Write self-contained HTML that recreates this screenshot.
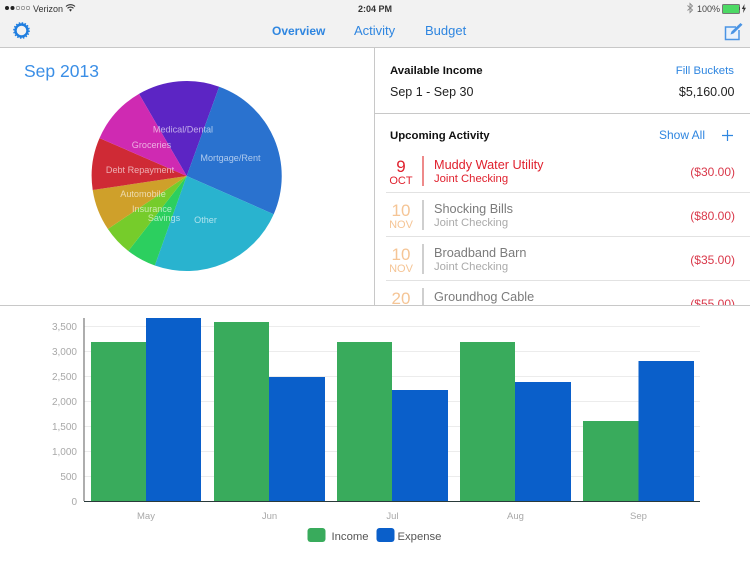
<!DOCTYPE html>
<html><head><meta charset="utf-8">
<style>
html,body{margin:0;padding:0;background:#fff}
#p{position:relative;width:750px;height:563px;overflow:hidden;background:#fff;font-family:"Liberation Sans",sans-serif;filter:blur(.3px)}
.t{position:absolute;white-space:nowrap;line-height:1}
.r{text-align:right}
.c{text-align:center}
.b{position:absolute;background:#c8c8c8}
.blue{color:#2f86e0}
</style></head><body>
<div id="p">
<div style="position:absolute;left:0;top:0;width:750px;height:47px;background:#f2f2f2"></div>
<div class="b" style="left:0;top:47px;width:750px;height:1px"></div>
<div class="b" style="left:374px;top:48px;width:1px;height:257px"></div>
<div class="b" style="left:375px;top:113px;width:375px;height:1px"></div>

<!-- status bar -->
<svg style="position:absolute;left:0;top:0" width="90" height="16">
<circle cx="7" cy="8" r="2" fill="#222"/><circle cx="12.500" cy="8" r="2" fill="#222"/>
<circle cx="18" cy="8" r="1.700" fill="none" stroke="#777" stroke-width=".6"/><circle cx="23" cy="8" r="1.700" fill="none" stroke="#777" stroke-width=".6"/><circle cx="28" cy="8" r="1.700" fill="none" stroke="#777" stroke-width=".6"/>
<path d="M66 6.500a6.500 6.500 0 0 1 9 0M67.500 8.300a4.300 4.300 0 0 1 6 0" fill="none" stroke="#333" stroke-width="1.100"/><path d="M69.100 9.800a2 2 0 0 1 2.800 0L70.500 11.600z" fill="#333"/>
</svg>
<div class="t" style="left:33px;top:5px;font-size:9px;color:#333">Verizon</div>
<div class="t c" style="left:345px;top:5px;width:60px;font-size:9px;font-weight:bold;color:#333">2:04 PM</div>
<svg style="position:absolute;left:684px;top:2px" width="12" height="12"><path d="M3.500 3.500l5 4.500-2.500 2.500V1.500l2.500 2.500-5 4.500" fill="none" stroke="#8a8a8a" stroke-width=".9"/></svg>
<div class="t" style="left:697px;top:5px;font-size:9px;color:#444">100%</div>
<div style="position:absolute;left:722px;top:4px;width:15.500px;height:7.500px;background:#4cd964;border:.5px solid #777;border-radius:1.500px"></div>
<div style="position:absolute;left:738.500px;top:6.500px;width:1.200px;height:3.500px;background:#555"></div>
<svg style="position:absolute;left:741px;top:4px" width="6" height="9"><path d="M3.500 0L.8 5H2.600L2 9 5 3.800H3.200z" fill="#333"/></svg>

<!-- nav -->
<svg style="position:absolute;left:13px;top:22px" width="18" height="18">
<circle cx="8.500" cy="8.500" r="6" fill="none" stroke="#1f7ee0" stroke-width="2.400"/>
<circle cx="8.500" cy="8.500" r="7.700" fill="none" stroke="#1f7ee0" stroke-width="1.300" stroke-dasharray="1.500 1.520"/>
</svg>
<div class="t blue" style="left:272px;top:25px;font-size:12px;font-weight:bold">Overview</div>
<div class="t blue" style="left:354px;top:24px;font-size:13px">Activity</div>
<div class="t blue" style="left:425px;top:24px;font-size:13px">Budget</div>
<svg style="position:absolute;left:724px;top:21px" width="20" height="20">
<path d="M12 6H1.500V18.500H15V9" fill="#eaf2fb" stroke="#4a94e4" stroke-width="1.500"/>
<path d="M6.500 13.500L7.500 10.500 16.500 2 18.500 3.800 9.500 12.500z" fill="#4a94e4"/>
</svg>

<!-- left pane -->
<div class="t blue" style="left:24px;top:63px;font-size:17.500px;color:#3a8ee6">Sep 2013</div>
<svg style="position:absolute;left:0;top:48px" width="374" height="257" viewBox="0 48 374 257" font-family="Liberation Sans, sans-serif" font-size="9.100" fill="#fff" fill-opacity=".62" text-anchor="middle">
<path d="M186.700 176L139 93.900A95 95 0 0 1 219.200 86.700z" fill="#5c25c4" fill-opacity="1"/>
<path d="M186.700 176L219.200 86.700A95 95 0 0 1 273.700 214.200z" fill="#2a72cf" fill-opacity="1"/>
<path d="M186.700 176L273.700 214.200A95 95 0 0 1 154.800 265.500z" fill="#29b3cf" fill-opacity="1"/>
<path d="M186.700 176L154.800 265.500A95 95 0 0 1 128.300 251z" fill="#2ccf5f" fill-opacity="1"/>
<path d="M186.700 176L128.300 251A95 95 0 0 1 107.900 229z" fill="#76cc2b" fill-opacity="1"/>
<path d="M186.700 176L107.900 229A95 95 0 0 1 92.700 190z" fill="#cfa02a" fill-opacity="1"/>
<path d="M186.700 176L92.700 190A95 95 0 0 1 99.500 138.100z" fill="#cf2a35" fill-opacity="1"/>
<path d="M186.700 176L99.500 138.100A95 95 0 0 1 139 93.900z" fill="#cf2ab2" fill-opacity="1"/>
<text x="183" y="132.500">Medical/Dental</text>
<text x="151.500" y="148">Groceries</text>
<text x="230.500" y="161">Mortgage/Rent</text>
<text x="140" y="173">Debt Repayment</text>
<text x="143" y="197">Automobile</text>
<text x="152" y="212">Insurance</text>
<text x="164" y="221">Savings</text>
<text x="205.500" y="223">Other</text>
</svg>

<!-- right top -->
<div class="t" style="left:390px;top:66px;font-size:11.400px;font-weight:bold;color:#111">Available Income</div>
<div class="t r blue" style="right:16px;top:66px;font-size:11.400px">Fill Buckets</div>
<div class="t" style="left:390px;top:86px;font-size:12.500px;color:#222;line-height:13px">Sep 1 - Sep 30</div>
<div class="t r" style="right:15.500px;top:86px;font-size:12.500px;color:#222;line-height:13px">$5,160.00</div>

<div class="t" style="left:390px;top:131px;font-size:11.400px;font-weight:bold;color:#111">Upcoming Activity</div>
<div class="t r blue" style="right:45px;top:129px;font-size:12px">Show All</div>
<svg style="position:absolute;left:721px;top:129px" width="13" height="13"><path d="M6.500 1V12M1 6.500H12" stroke="#2f86e0" stroke-width="1.200" fill="none"/></svg>

<!-- rows -->
<div class="t c" style="left:386px;top:158px;width:30px;font-size:17px;color:#e0212e">9</div>
<div class="t c" style="left:386px;top:176px;width:30px;font-size:11px;color:#e0212e">OCT</div>
<div style="position:absolute;left:422px;top:156px;width:2px;height:30px;background:#ee8a8a"></div>
<div class="t" style="left:434px;top:159px;font-size:12.700px;color:#e0212e">Muddy Water Utility</div>
<div class="t" style="left:434px;top:174px;font-size:11.300px;color:#e0212e">Joint Checking</div>
<div class="t r" style="right:15px;top:166px;font-size:12px;color:#d9384a">($30.00)</div>
<div class="b" style="left:386px;top:192px;width:364px;height:1px;background:#e2e2e2"></div>

<div class="t c" style="left:386px;top:202px;width:30px;font-size:17px;color:#f5c596">10</div>
<div class="t c" style="left:386px;top:220px;width:30px;font-size:11px;color:#f5c596">NOV</div>
<div style="position:absolute;left:422px;top:200px;width:2px;height:30px;background:#cfcfcf"></div>
<div class="t" style="left:434px;top:203px;font-size:12.700px;color:#7b7b7b">Shocking Bills</div>
<div class="t" style="left:434px;top:218px;font-size:11.300px;color:#aaa">Joint Checking</div>
<div class="t r" style="right:15px;top:210px;font-size:12px;color:#d9384a">($80.00)</div>
<div class="b" style="left:386px;top:236px;width:364px;height:1px;background:#e2e2e2"></div>

<div class="t c" style="left:386px;top:246px;width:30px;font-size:17px;color:#f5c596">10</div>
<div class="t c" style="left:386px;top:264px;width:30px;font-size:11px;color:#f5c596">NOV</div>
<div style="position:absolute;left:422px;top:244px;width:2px;height:30px;background:#cfcfcf"></div>
<div class="t" style="left:434px;top:247px;font-size:12.700px;color:#7b7b7b">Broadband Barn</div>
<div class="t" style="left:434px;top:262px;font-size:11.300px;color:#aaa">Joint Checking</div>
<div class="t r" style="right:15px;top:254px;font-size:12px;color:#d9384a">($35.00)</div>
<div class="b" style="left:386px;top:280px;width:364px;height:1px;background:#e2e2e2"></div>

<div class="t c" style="left:386px;top:290px;width:30px;font-size:17px;color:#f5c596">20</div>
<div style="position:absolute;left:422px;top:288px;width:2px;height:17px;background:#cfcfcf"></div>
<div class="t" style="left:434px;top:291px;font-size:12.700px;color:#7b7b7b">Groundhog Cable</div>
<div class="t r" style="right:15px;top:298px;font-size:12px;color:#d9384a">($55.00)</div>

<!-- chart panel -->
<div style="position:absolute;left:0;top:305px;width:750px;height:258px;background:#fff;border-top:1px solid #c8c8c8;box-sizing:border-box"></div>
<svg style="position:absolute;left:0;top:306px" width="750" height="257" viewBox="0 306 750 257" font-family="Liberation Sans, sans-serif">
<g stroke="#ececec" stroke-width="1">
<path d="M84 326.500H700M84 351.500H700M84 376.500H700M84 401.500H700M84 426.500H700M84 451.500H700M84 476.500H700"/>
</g>
<g fill="#39ab5c">
<rect x="91" y="342" width="55" height="159"/>
<rect x="214" y="322" width="55" height="179"/>
<rect x="337" y="342" width="55" height="159"/>
<rect x="460" y="342" width="55" height="159"/>
<rect x="583" y="421" width="55.500" height="80"/>
</g>
<g fill="#0a5fca">
<rect x="146" y="318" width="55" height="183"/>
<rect x="269" y="377" width="56" height="124"/>
<rect x="392" y="390" width="56" height="111"/>
<rect x="515" y="382" width="56" height="119"/>
<rect x="638.500" y="361" width="55.500" height="140"/>
</g>
<path d="M84 318V501" stroke="#777" stroke-width="1.200" fill="none"/>
<path d="M84 501.500H700" stroke="#2a3a3a" stroke-width="1" fill="none"/>
<g fill="#a8a8a8" font-size="10" text-anchor="end">
<text x="77" y="330">3,500</text><text x="77" y="355">3,000</text><text x="77" y="380">2,500</text><text x="77" y="405">2,000</text><text x="77" y="430">1,500</text><text x="77" y="455">1,000</text><text x="77" y="480">500</text><text x="77" y="505">0</text>
</g>
<g fill="#a8a8a8" font-size="9.500" text-anchor="middle">
<text x="146" y="519">May</text><text x="269.500" y="519">Jun</text><text x="392.500" y="519">Jul</text><text x="515.500" y="519">Aug</text><text x="638.500" y="519">Sep</text>
</g>
<rect x="307.500" y="528" width="18" height="14" rx="3" fill="#39ab5c"/>
<rect x="376.500" y="528" width="18" height="14" rx="3" fill="#0a5fca"/>
<g fill="#555" font-size="11.300"><text x="331.500" y="540">Income</text><text x="397.500" y="540">Expense</text></g>
</svg>
</div>
</body></html>
